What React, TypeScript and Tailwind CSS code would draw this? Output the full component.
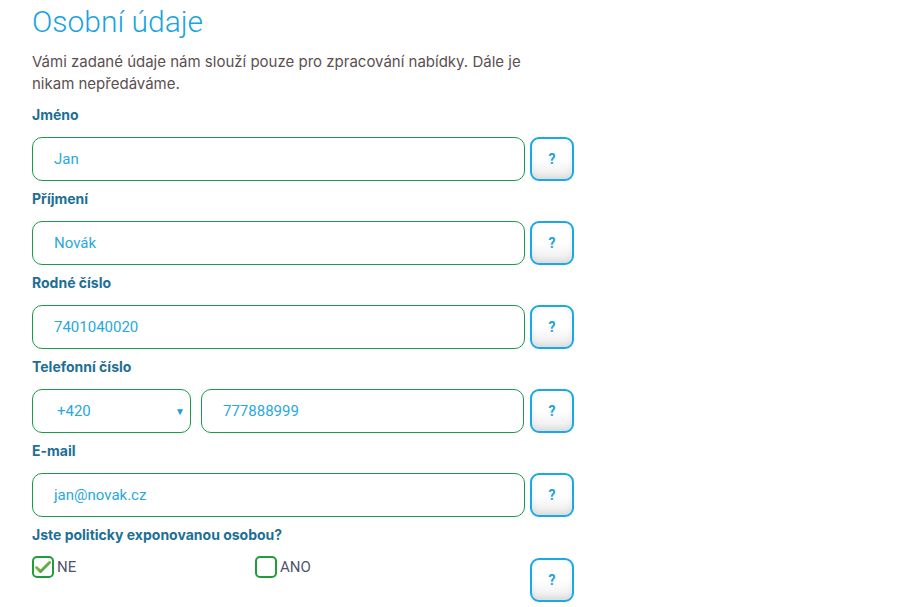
import React from "react";

const font = { fontFamily: "Roboto, 'Liberation Sans', sans-serif" };
const inter = { fontFamily: "Inter, 'Liberation Sans', sans-serif" };

function Help({ className = "" }: { className?: string }) {
  return (
    <button
      className={`w-[44px] h-[44px] shrink-0 rounded-[9px] border-2 border-[#19a9e6] bg-gradient-to-b from-white via-white to-[#ececec] shadow-[inset_0_-3px_6px_rgba(0,0,0,0.08)] flex items-center justify-center text-[#1a9fe0] font-bold text-[14px] ${className}`}
    >
      ?
    </button>
  );
}

function Label({ children }: { children: React.ReactNode }) {
  return (
    <div className="text-[14px] leading-[20px] font-bold text-[#1d6f93] mb-[12px]" style={inter}>
      {children}
    </div>
  );
}

function Input({ value, className = "" }: { value: string; className?: string }) {
  return (
    <div
      className={`h-[44px] rounded-[10px] border border-[#1a9a4a] flex items-center pl-[21px] text-[15px] text-[#29a8e0] ${className}`}
    >
      {value}
    </div>
  );
}

function Field({ label, value }: { label: string; value: string }) {
  return (
    <div className="mb-[8px]">
      <Label>{label}</Label>
      <div className="flex gap-[5px]">
        <Input value={value} className="w-[493px]" />
        <Help />
      </div>
    </div>
  );
}

function Check({ checked }: { checked: boolean }) {
  return (
    <div className="w-[22px] h-[22px] rounded-[5px] border-2 border-[#1e9e3a] flex items-center justify-center">
      {checked && (
        <svg width="16" height="14" viewBox="0 0 16 14">
          <defs>
            <linearGradient id="cg" x1="0" y1="0" x2="1" y2="1">
              <stop offset="0" stopColor="#a5c93a" />
              <stop offset="1" stopColor="#2a9a48" />
            </linearGradient>
          </defs>
          <path d="M1.5 7.5 L5.5 11.5 L14.5 2.5" fill="none" stroke="url(#cg)" strokeWidth="3" strokeLinecap="round" strokeLinejoin="round" />
        </svg>
      )}
    </div>
  );
}

export default function App() {
  return (
    <div className="w-[900px] h-[607px] bg-white overflow-hidden pl-[32px]" style={font}>
      <h1 className="text-[30px] leading-[44px] font-light text-[#1aa3e3]">Osobní údaje</h1>
      <p className="text-[15px] leading-[22px] text-[#5b5050] w-[525px] mt-[7px]" style={inter}>
        Vámi zadané údaje nám slouží pouze pro zpracování nabídky. Dále je nikam nepředáváme.
      </p>
      <div className="mt-[10px]">
        <Field label="Jméno" value="Jan" />
        <Field label="Příjmení" value="Novák" />
        <Field label="Rodné číslo" value="7401040020" />
        <div className="mb-[8px]">
          <Label>Telefonní číslo</Label>
          <div className="flex">
            <div className="w-[159px] h-[44px] rounded-[10px] border border-[#1a9a4a] flex items-center justify-between pl-[24px] pr-[5px] text-[15px] text-[#29a8e0]">
              <span>+420</span>
              <span className="text-[10px] text-[#1aa0e0]">▼</span>
            </div>
            <Input value="777888999" className="w-[323px] ml-[10px]" />
            <Help className="ml-[6px]" />
          </div>
        </div>
        <Field label="E-mail" value="jan@novak.cz" />
        <div>
          <Label>Jste politicky exponovanou osobou?</Label>
          <div className="flex items-start -mt-[1px]">
            <div className="w-[223px] flex items-center gap-[3px] text-[15px] text-[#4f5570]">
              <Check checked />
              <span>NE</span>
            </div>
            <div className="w-[275px] flex items-center gap-[3px] text-[15px] text-[#4f5570]">
              <Check checked={false} />
              <span>ANO</span>
            </div>
            <Help className="mt-[2px]" />
          </div>
        </div>
      </div>
    </div>
  );
}
